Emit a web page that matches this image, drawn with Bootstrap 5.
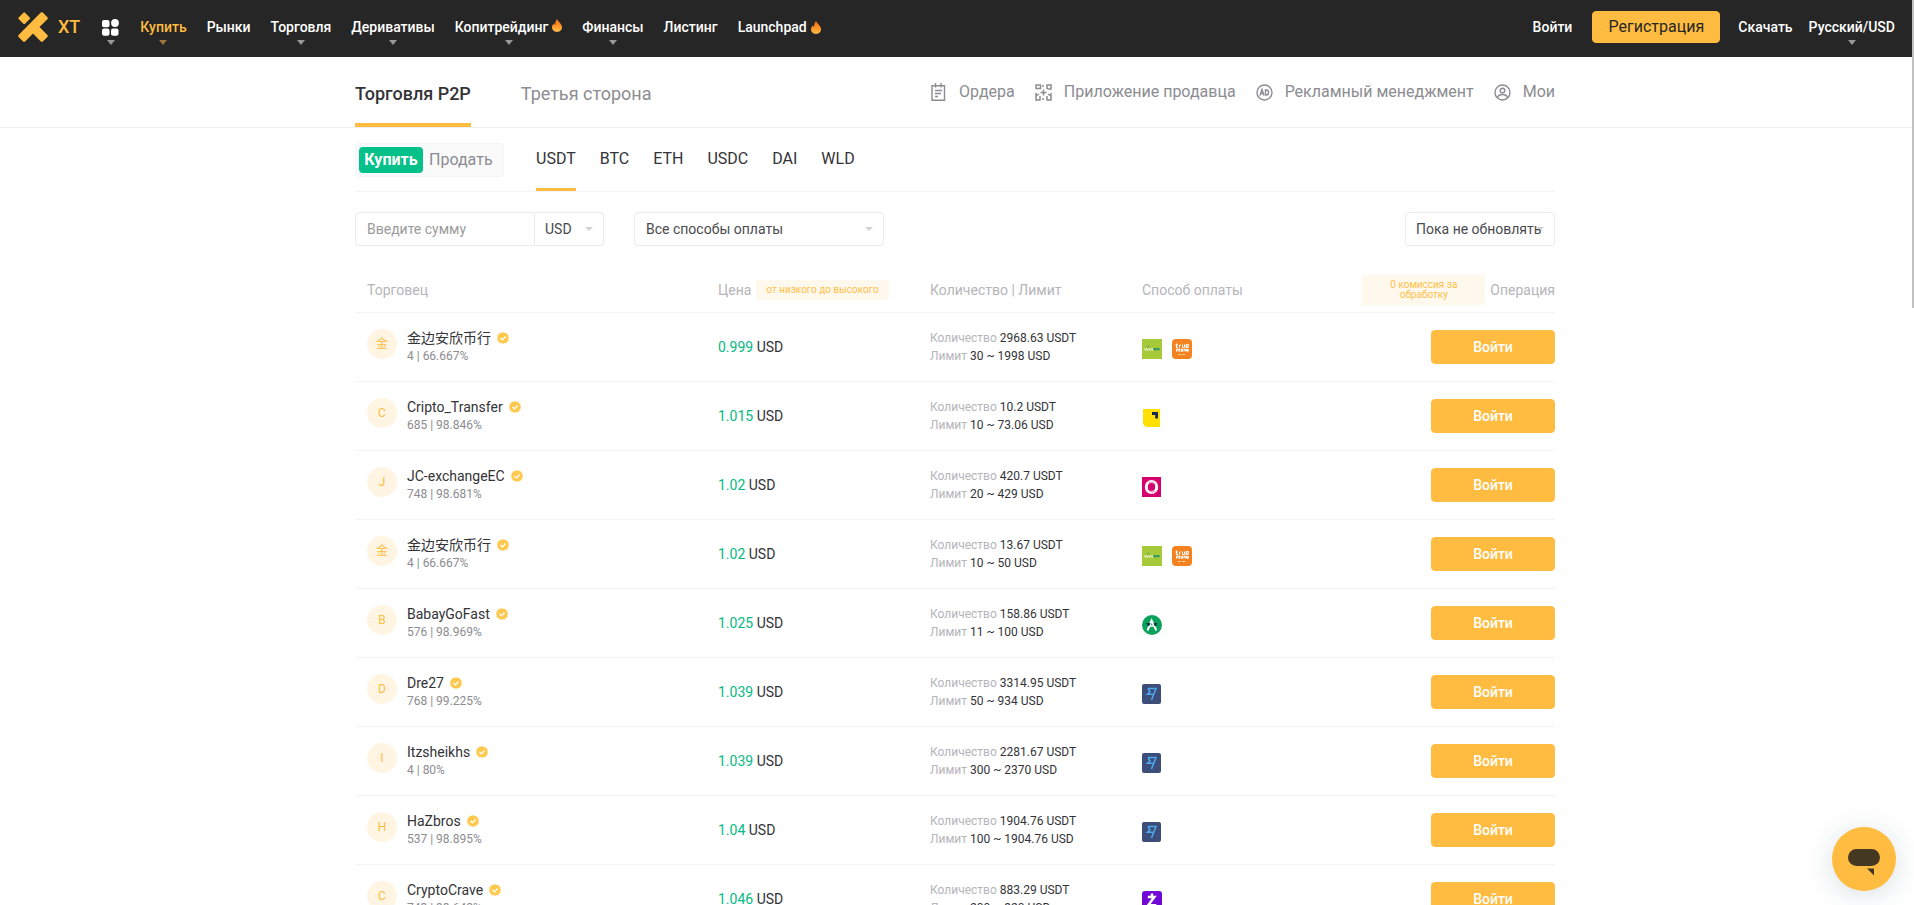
<!DOCTYPE html>
<html lang="ru">
<head>
<meta charset="utf-8">
<meta name="viewport" content="width=device-width, initial-scale=1">
<title>XT P2P</title>
<link href="https://cdn.jsdelivr.net/npm/bootstrap@5.3.0/dist/css/bootstrap.min.css" rel="stylesheet">
<style>
:root{--gold:#ffbc40;--ink:#333338;--muted2:#8c8c91;--pale:#b5b5ba;--line:#f3f4f8}
body{font-family:Roboto,"Noto Sans CJK SC",sans-serif;font-size:14px;line-height:20px;color:var(--ink);background:#fff}
a{text-decoration:none;color:inherit}
.topbar{background:#262626;height:57px;color:#fff;font-weight:500;padding:0 19px 3px 18px}
.topbar .menu{gap:20px}
.topbar .menu a{position:relative;display:flex;align-items:center;white-space:nowrap}
.topbar .drop::after{content:"";position:absolute;left:50%;margin-left:-4px;top:23px;border:4px solid transparent;border-top:5px solid #98989a;border-bottom:0}
.topbar .gold,.brandname{color:var(--gold)}
.topbar .gold::after{border-top-color:#9a7739}
.brandlink{gap:10px}
.brandname{font-size:18px;font-weight:500}
.mainmenu{margin-left:22px}
.topbar .apps{width:18px;height:20px}
.btn-gold{--bs-btn-bg:#ffbc40;--bs-btn-border-color:#ffbc40;--bs-btn-hover-bg:#f5b030;--bs-btn-hover-border-color:#f5b030;--bs-btn-color:#fff;--bs-btn-hover-color:#fff;border-radius:4px;padding:0;white-space:nowrap;line-height:20px}
.btn-reg{--bs-btn-color:#262626;width:128px;height:32px;font-size:16px;margin:0 18px 0 20px}
.btn-row{width:124px;height:34px;font-size:14px;font-weight:500}
.wrap{width:100%;max-width:1200px;margin:0 auto}
.subhead,.content{padding-right:4px}
.subhead{border-bottom:1px solid #eee}
.subhead .wrap{height:70px}
.maintabs{gap:50px}
.maintab{font-size:18px;line-height:24px;color:var(--muted2);height:70px;padding-top:25px;border-bottom:4px solid transparent}
.maintab.on{color:var(--ink);font-weight:500;border-color:var(--gold)}
.tools{font-size:16px;color:var(--muted2);gap:20px}
.tools a{display:flex;align-items:center;gap:12px;white-space:nowrap}
.coinbar{height:64px;border-bottom:1px solid var(--line)}
.toggle{background:#fafafa;border:1px solid var(--line);border-radius:4px;width:149px;height:34px;padding:3px;gap:6px;margin-top:15px}
.toggle button{border:0;background:none;padding:0;font-size:16px;color:var(--muted2)}
.toggle .on{background:#05c088;color:#fff;border-radius:4px;width:64px;height:26px;font-weight:700}
.coins{margin-left:32px;gap:24px;font-size:16px}
.coins a{height:63px;padding-top:21px;border-bottom:3px solid transparent}
.coins .on{border-color:var(--gold)}
.filters{padding-top:20px}
.fld,.fsel{height:34px;border:1px solid #ebebeb;font-size:14px;line-height:20px;color:#4a4a4f;padding:0 11px;background-color:#fff;border-radius:4px;outline:0}
.fld{width:180px;border-radius:4px 0 0 4px}
.fld::placeholder{color:#9b9b9b}
.fsel{appearance:none;background-image:url("data:image/svg+xml,%3Csvg xmlns='http://www.w3.org/2000/svg' viewBox='0 0 8 4'%3E%3Cpath fill='%23d2d2d2' d='M0 0h8L4 4z'/%3E%3C/svg%3E");background-repeat:no-repeat;background-size:8px 4px;background-position:right 10px center}
.cur{width:69px;border-left:0;border-radius:0 4px 4px 0;padding:0 10px}
.pay{width:250px;margin-left:30px}
.refresh{width:150px;padding:0 10px}
.offers{table-layout:fixed;width:100%;margin-top:22px}
.offers th{font-weight:400;color:var(--pale);height:44px;padding:0;border-bottom:1px solid var(--line)}
.offers td{height:69px;padding:0;border-bottom:1px solid var(--line);vertical-align:middle}
.offers th:first-child,.offers td:first-child{padding-left:12px}
.col-name{width:363px}
.col-mid{width:212px}
.col-pay{width:200px}
.withtag{gap:5px}
.tag{background:#fff8ec;color:#ffbf4a;font-size:10px;line-height:10px;padding:5px 10px;text-align:center;white-space:nowrap}
.fee{width:123px;height:30px;white-space:normal;padding:5px 20px}
.ava{width:30px;height:30px;border-radius:50%;background:#fff5e2;color:var(--gold);font-size:12px;margin-right:10px}
.who{gap:6px;line-height:18px}
.stat{font-size:12px;line-height:18px}
.stat .lbl{color:var(--pale)}
.rate{font-size:12px;line-height:18px;color:var(--muted2)}
.green{color:#05b983}
.icons{gap:10px;padding-top:4px}
.chat{position:fixed;right:18px;bottom:14px;width:64px;height:64px;border:0;border-radius:50%;background:var(--gold);padding:0;box-shadow:0 4px 28px rgba(20,60,90,.16)}
.thumb{position:fixed;right:0;top:0;width:2px;height:34vh;background:#c1c1c1;z-index:5}
svg{display:block;flex:none}
</style>
</head>
<body class="vh-100 overflow-hidden">
<svg width="0" height="0" class="position-absolute" aria-hidden="true">
 <defs><linearGradient id="fg" x1="0" y1="0" x2="0" y2="1"><stop offset="0" stop-color="#f26a10"/><stop offset=".6" stop-color="#ff9a2c"/><stop offset="1" stop-color="#ffc04a"/></linearGradient></defs>
 <symbol id="flame" viewBox="0 0 10 13"><path fill="url(#fg)" d="M5 0C6 2.600 10 4.600 10 8.300 10 11 7.800 13 5 13S0 11 0 8.300C0 6.500 1 5.500 2 4.200c.3 1 .7 1.500 1.200 1.700C3 3.500 3.800 1.500 5 0z"/></symbol>
 <symbol id="ok" viewBox="0 0 12 12"><path fill="#ffc84f" d="M6 0l1.500.9 1.800-.2.600 1.600 1.600.8-.2 1.700L12 6l-.7 1.300.2 1.700-1.600.8-.6 1.500-1.800-.2L6 12l-1.500-.9-1.800.2-.6-1.500L.5 9l.2-1.700L0 6l.7-1.200L.5 3.100l1.600-.8.6-1.600 1.800.2z"/><path d="M3.500 6l1.900 1.900 3.200-3.400" fill="none" stroke="#fff" stroke-width="1.300"/></symbol>
 <symbol id="wing" viewBox="0 0 20 20"><path fill="#a6ca3a" d="M0 0h20v20H0z"/><path d="M2.500 9.500l1 2 1-2 1 2 .8-2M7.500 9.500v2m1.500 0v-1.700h1.500v1.700" stroke="#fff" fill="none" stroke-width=".8"/><path d="M5.500 8l1.300-1" stroke="#147a5e"/><path d="M11.500 9.200h6v2h-6z" fill="#178a72"/><path d="M13 10.200h3.500" stroke="#a6ca3a" stroke-width=".4"/></symbol>
 <symbol id="truem" viewBox="0 0 20 20"><rect width="20" height="20" rx="4" fill="#f58220"/><path d="M4.500 4.500v4h1.500M3.500 6h2.500M7.500 8.700V6H9M10.500 5.500v3h2v-3M16.500 8.500H14V5.600h2.500v1.600H14M4.500 12.500v-2.400h3v2.400M6 10.100v2.400M9 10.100h1.500v2.300H9zM12 12.500v-2.400h1.300v2.400M14.500 10v2h1.500V10m0 0v3.200" stroke="#fff" fill="none"/><path d="M6 15.500h8" stroke="#fbd0a5" stroke-width="1.200" stroke-dasharray="3 1"/></symbol>
 <symbol id="pich" viewBox="0 0 20 20"><path fill="#ffe000" d="M1 1h17v18H6q-5 0-5-5z"/><path fill="#172858" d="M10 4h6v6.500h-2.800V7H10z"/></symbol>
 <symbol id="guay" viewBox="0 0 20 20"><path fill="#d6006e" d="M0 0h19v20H0z"/><ellipse cx="9.500" cy="10" rx="5.200" ry="5.500" fill="none" stroke="#fff" stroke-width="3"/><path d="M6.300 6.200q5-3 7 2M6 12q2.500 5 7 2" stroke="#d6006e" stroke-width=".5" fill="none"/></symbol>
 <symbol id="adv" viewBox="0 0 20 20"><circle cx="10" cy="10" r="10" fill="#0aa15c"/><path d="M5.500 15.500L9.600 5.500l4.800 10" stroke="#fff" stroke-width="2" fill="none"/><path fill="#123549" d="M4 8h4.500l-1 3H6zM11.500 8h4l-1.500 3h-1.500z"/><path d="M7.500 11h4" stroke="#fff" stroke-width="1.500"/></symbol>
 <symbol id="wise" viewBox="0 0 20 20"><rect width="19" height="20" rx="2" fill="#3b4d78"/><path d="M6 4.500h8L9.500 16M6 4.500l2 3.300-2.600 2.500h5.500" fill="none" stroke="#4fa8ee" stroke-width="1.500"/></symbol>
 <symbol id="zel" viewBox="0 0 20 20"><rect width="20" height="20" rx="3" fill="#7109d6"/><path d="M5.800 6h6.500l-6 8.200h8M10 2.500V6m0 8v3.500" fill="none" stroke="#fff" stroke-width="2.500"/></symbol>
</svg>

<header class="topbar d-flex align-items-center">
 <a href="#" class="brandlink d-flex align-items-center"><svg width="30" height="30" viewBox="0 0 30 30" fill="#ffbc40"><rect x="1.700" y="1.700" width="9" height="9" rx="1.500" transform="rotate(45 6.200 6.200)"/><path d="M22.800.6q1-.9 2 0l4.600 4.600q.9 1 0 2L21.500 15l7.900 7.900q.9 1 0 2l-4.600 4.500q-1 .9-2 0L15 21.500l-7.900 7.900q-1 .9-2 0L.6 24.900q-.9-1 0-2z"/></svg><span class="brandname">XT</span></a>
 <nav class="menu mainmenu d-flex align-items-center">
  <a href="#" class="drop apps" aria-label="Продукты"><svg width="17" height="17" viewBox="0 0 17 17" fill="#fff"><rect y="1" width="7.500" height="7.300" rx="2"/><circle cx="13" cy="4" r="3.900"/><rect y="9.500" width="7.500" height="7.300" rx="2"/><rect x="9" y="9.500" width="7.500" height="7.300" rx="2"/></svg></a>
  <a href="#" class="drop gold">Купить</a><a href="#">Рынки</a><a href="#" class="drop">Торговля</a><a href="#" class="drop">Деривативы</a>
  <a href="#" class="drop">Копитрейдинг<svg width="10" height="13" class="ms-1 mb-1"><use href="#flame"/></svg></a>
  <a href="#" class="drop">Финансы</a><a href="#">Листинг</a><a href="#">Launchpad<svg width="10" height="13" class="ms-1"><use href="#flame"/></svg></a>
 </nav>
 <div class="menu d-flex align-items-center ms-auto gap-0"><a href="#">Войти</a><button class="btn btn-gold btn-reg" type="button">Регистрация</button><a href="#">Скачать</a><a href="#" class="drop ms-3">Русский/USD</a></div>
</header>

<div class="subhead"><div class="wrap d-flex justify-content-between">
 <nav class="maintabs d-flex"><a href="#" class="maintab on">Торговля P2P</a><a href="#" class="maintab">Третья сторона</a></nav>
 <nav class="tools d-flex align-items-center">
  <a href="#"><svg width="17" height="18" viewBox="0 0 17 18" fill="none" stroke="#8c8c91" stroke-width="1.400"><path d="M2 2.700h12.500v14.500H2zM5.500 0v4.500M11 0v4.500M5 7.500h7M5 10.500h6M5 13.500h3"/></svg>Ордера</a>
  <a href="#"><svg width="17" height="17" viewBox="0 0 17 17" fill="none" stroke="#8c8c91" stroke-width="1.500"><path d="M1 5V1h4.500v3.500H1M12 5V1h4v4h-3.500M1 9v3l3-2M1 12v4h4v-4M16 9v3l-3-2M12 12v4h4v-4M8.500 5.500v6M5.500 8.500h6M8 1v2M8 14v2"/></svg>Приложение продавца</a>
  <a href="#"><svg width="17" height="17" viewBox="0 0 17 17" fill="none" stroke="#8c8c91" stroke-width="1.400"><circle cx="8.500" cy="8.500" r="7.500"/><path d="M4 11.500l2-6 2 6M5 9.500h2.500M9.500 6v5h1q2 0 2-2.500t-2-2.500z"/></svg>Рекламный менеджмент</a>
  <a href="#"><svg width="17" height="17" viewBox="0 0 17 17" fill="none" stroke="#8c8c91" stroke-width="1.400"><circle cx="8.500" cy="8.500" r="7.500"/><circle cx="8.500" cy="6.500" r="2.300"/><path d="M3.500 13.500q1-3 5-3t5 3"/></svg>Мои</a>
 </nav>
</div></div>

<div class="content"><main class="wrap">
 <div class="coinbar d-flex align-items-start">
  <div class="toggle d-flex align-items-center"><button type="button" class="on">Купить</button><button type="button">Продать</button></div>
  <nav class="coins d-flex"><a href="#" class="on">USDT</a><a href="#">BTC</a><a href="#">ETH</a><a href="#">USDC</a><a href="#">DAI</a><a href="#">WLD</a></nav>
 </div>
 <form class="filters d-flex">
  <input class="fld" type="text" placeholder="Введите сумму" aria-label="Сумма"><select class="fsel cur" aria-label="Валюта"><option>USD</option></select>
  <select class="fsel pay" aria-label="Способ оплаты"><option>Все способы оплаты</option></select>
  <select class="fsel refresh ms-auto" aria-label="Обновление"><option>Пока не обновлять</option></select>
 </form>
 <table class="offers">
  <colgroup><col class="col-name"><col class="col-mid"><col class="col-mid"><col class="col-pay"><col></colgroup>
  <thead><tr><th>Торговец</th><th><div class="withtag d-flex align-items-center">Цена<span class="tag">от низкого до высокого</span></div></th><th>Количество | Лимит</th><th>Способ оплаты</th><th><div class="withtag d-flex align-items-center justify-content-end"><span class="tag fee">0 комиссия за обработку</span>Операция</div></th></tr></thead>
  <tbody id="rows"></tbody>
 </table>
</main></div>
<button class="chat" type="button" aria-label="Чат"><svg width="64" height="64" viewBox="0 0 64 64" fill="#453822"><rect x="16" y="22" width="32" height="17" rx="8.500"/><path d="M35 41.500h7v7z"/></svg></button>
<div class="thumb"></div>
<script>
const offers=[
 ["金","金边安欣币行","4 | 66.667%","0.999","2968.63","30 ~ 1998",["wing","truem"]],
 ["C","Cripto_Transfer","685 | 98.846%","1.015","10.2","10 ~ 73.06",["pich"]],
 ["J","JC-exchangeEC","748 | 98.681%","1.02","420.7","20 ~ 429",["guay"]],
 ["金","金边安欣币行","4 | 66.667%","1.02","13.67","10 ~ 50",["wing","truem"]],
 ["B","BabayGoFast","576 | 98.969%","1.025","158.86","11 ~ 100",["adv"]],
 ["D","Dre27","768 | 99.225%","1.039","3314.95","50 ~ 934",["wise"]],
 ["I","Itzsheikhs","4 | 80%","1.039","2281.67","300 ~ 2370",["wise"]],
 ["H","HaZbros","537 | 98.895%","1.04","1904.76","100 ~ 1904.76",["wise"]],
 ["C","CryptoCrave","743 | 98.642%","1.046","883.29","200 ~ 920",["zel"]]];
document.getElementById("rows").innerHTML=offers.map(([a,n,r,p,q,l,ic])=>`<tr>
 <td><div class="d-flex"><span class="ava d-flex align-items-center justify-content-center">${a}</span><div><div class="who d-flex align-items-center">${n}<svg width="12" height="12"><use href="#ok"/></svg></div><div class="rate">${r}</div></div></div></td>
 <td><span class="green">${p}</span> USD</td>
 <td class="stat"><div><span class="lbl">Количество</span> ${q} USDT</div><div><span class="lbl">Лимит</span> ${l} USD</div></td>
 <td><div class="icons d-flex">${ic.map(i=>`<svg width="20" height="20"><use href="#${i}"/></svg>`).join("")}</div></td>
 <td class="text-end"><button class="btn btn-gold btn-row" type="button">Войти</button></td></tr>`).join("");
</script>
<script src="https://cdn.jsdelivr.net/npm/bootstrap@5.3.0/dist/js/bootstrap.bundle.min.js"></script>
</body>
</html>
